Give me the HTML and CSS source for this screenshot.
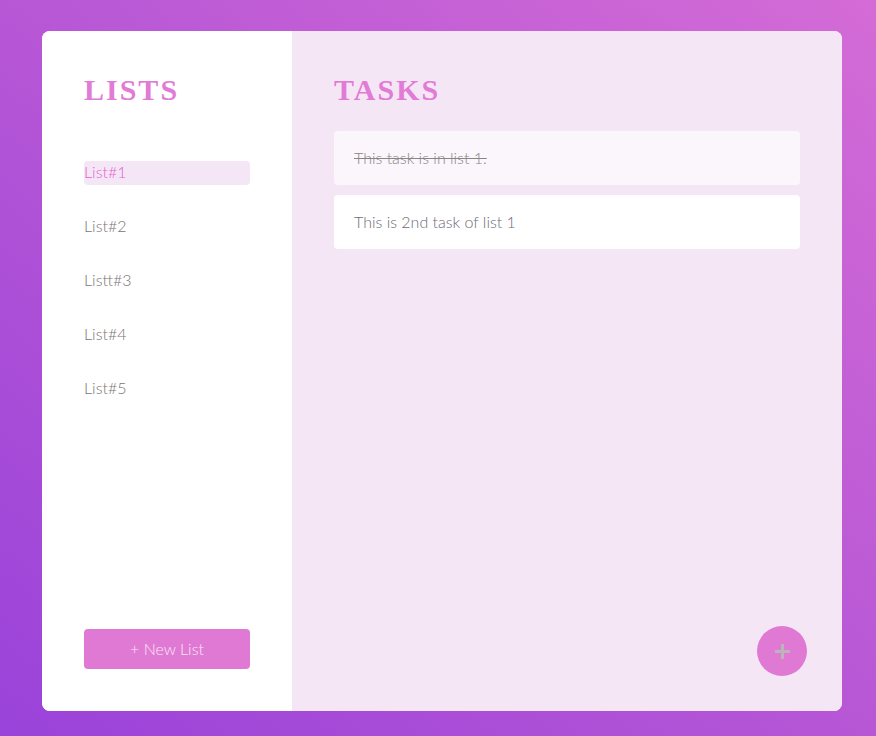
FILE: index.html
```html
<!DOCTYPE html>
<html lang="en">
<head>
<meta charset="utf-8">
<title>Todo</title>
<link rel="stylesheet" href="styles.css">
</head>
<body>
<div class="app">
  <aside class="lists">
    <h1 class="title">LISTS</h1>
    <ul class="list-items">
      <li class="list-item active">List#1</li>
      <li class="list-item">List#2</li>
      <li class="list-item">Listt#3</li>
      <li class="list-item">List#4</li>
      <li class="list-item">List#5</li>
    </ul>
    <button class="new-list">+ New List</button>
  </aside>
  <main class="tasks">
    <h1 class="title">TASKS</h1>
    <div class="task-items">
      <div class="task done">This task is in list 1.</div>
      <div class="task">This is 2nd task of list 1</div>
    </div>
    <button class="fab"><span class="plus"></span></button>
  </main>
</div>
</body>
</html>
```
FILE: styles.css
```css
* { box-sizing: border-box; }
html, body { height: 100%; }
body {
  margin: 0;
  padding: 31px 0 0 42px;
  background: linear-gradient(to top right, #9a43da 0%, #b757d6 50%, #d46bd6 100%);
  font-family: "Lato", "Noto Sans", sans-serif;
  font-weight: 300;
}
.app {
  width: 800px;
  height: 680px;
  display: flex;
  border-radius: 8px;
  overflow: hidden;
  background: #fff;
}
.lists {
  width: 250px;
  padding: 42px;
  display: flex;
  flex-direction: column;
  background: #fff;
}
.title {
  margin: 0;
  font-family: "Liberation Serif", "Times New Roman", serif;
  font-weight: 700;
  font-size: 30px;
  line-height: 34px;
  letter-spacing: 2px;
  color: #e27bd6;
}
.list-items {
  list-style: none;
  margin: 54px 0 0;
  padding: 0;
  display: flex;
  flex-direction: column;
  gap: 30px;
}
.list-item {
  height: 24px;
  line-height: 22px;
  padding-bottom: 2px;
  font-size: 16px;
  color: #7a7575;
  border-radius: 4px;
}
.list-item.active {
  background: #f5e6f5;
  color: #e264d6;
}
.new-list {
  margin-top: auto;
  height: 40px;
  padding: 0 0 2px;
  border: none;
  border-radius: 4px;
  background: #e079d4;
  color: #f7e8f5;
  font-family: inherit;
  font-weight: 300;
  font-size: 16px;
}
.tasks {
  position: relative;
  flex: 1;
  padding: 42px;
  background: #f5e6f5;
}
.task-items {
  margin-top: 24px;
  display: flex;
  flex-direction: column;
  gap: 10px;
}
.task {
  height: 54px;
  padding: 0 20px 2px;
  display: flex;
  align-items: center;
  background: #fff;
  border-radius: 4px;
  font-size: 16px;
  color: #6e6a78;
}
.task.done {
  background: #fbf6fb;
  color: #8a8484;
  text-decoration: line-through;
}
.fab {
  position: absolute;
  right: 35px;
  bottom: 35px;
  width: 50px;
  height: 50px;
  border: none;
  border-radius: 50%;
  background: #e079d4;
  display: flex;
  align-items: center;
  justify-content: center;
  padding: 0;
}
.plus {
  position: relative;
  width: 15px;
  height: 15px;
}
.plus::before, .plus::after {
  content: "";
  position: absolute;
  background: #bdb4bb;
}
.plus::before { left: 0; right: 0; top: 6px; height: 3px; }
.plus::after { top: 0; bottom: 0; left: 6px; width: 3px; }
```
